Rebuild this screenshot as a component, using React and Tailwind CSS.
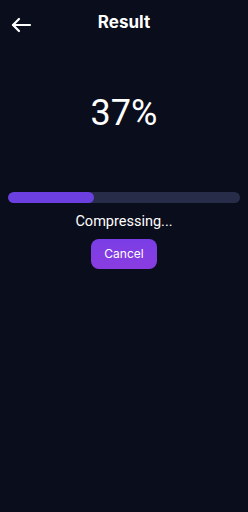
import React from "react";

export default function App() {
  return (
    <div className="w-[248px] h-[512px] bg-[#0a0d1c] text-white flex flex-col" style={{ fontFamily: "Roboto, sans-serif" }}>
      <div className="relative h-[46px] flex items-center justify-center">
        <svg className="absolute left-[10px] top-[16px]" width="22" height="18" viewBox="0 0 22 18" fill="none" stroke="white" strokeWidth="2.2" strokeLinecap="round" strokeLinejoin="round">
          <path d="M20 9H3" />
          <path d="M9 3L3 9l6 6" />
        </svg>
        <span className="text-[17px] font-bold" style={{ fontFamily: "Inter, sans-serif" }}>Result</span>
      </div>
      <div className="mt-[45px] text-center text-[36px] leading-[44px]">37%</div>
      <div className="mt-[57px] mx-[8px] h-[11px] rounded-full bg-[#272c48] overflow-hidden">
        <div className="h-full bg-[#6c3fe0] rounded-full" style={{ width: "37%" }} />
      </div>
      <div className="mt-[9px] text-center text-[14.5px] leading-[20px]">Compressing...</div>
      <div className="mt-[7px] flex justify-center">
        <button className="w-[66px] h-[30px] rounded-[8px] bg-gradient-to-b from-[#7a3ee6] to-[#8a3ce0] text-[12px] text-white" style={{ fontFamily: "Inter, sans-serif" }}>Cancel</button>
      </div>
    </div>
  );
}
